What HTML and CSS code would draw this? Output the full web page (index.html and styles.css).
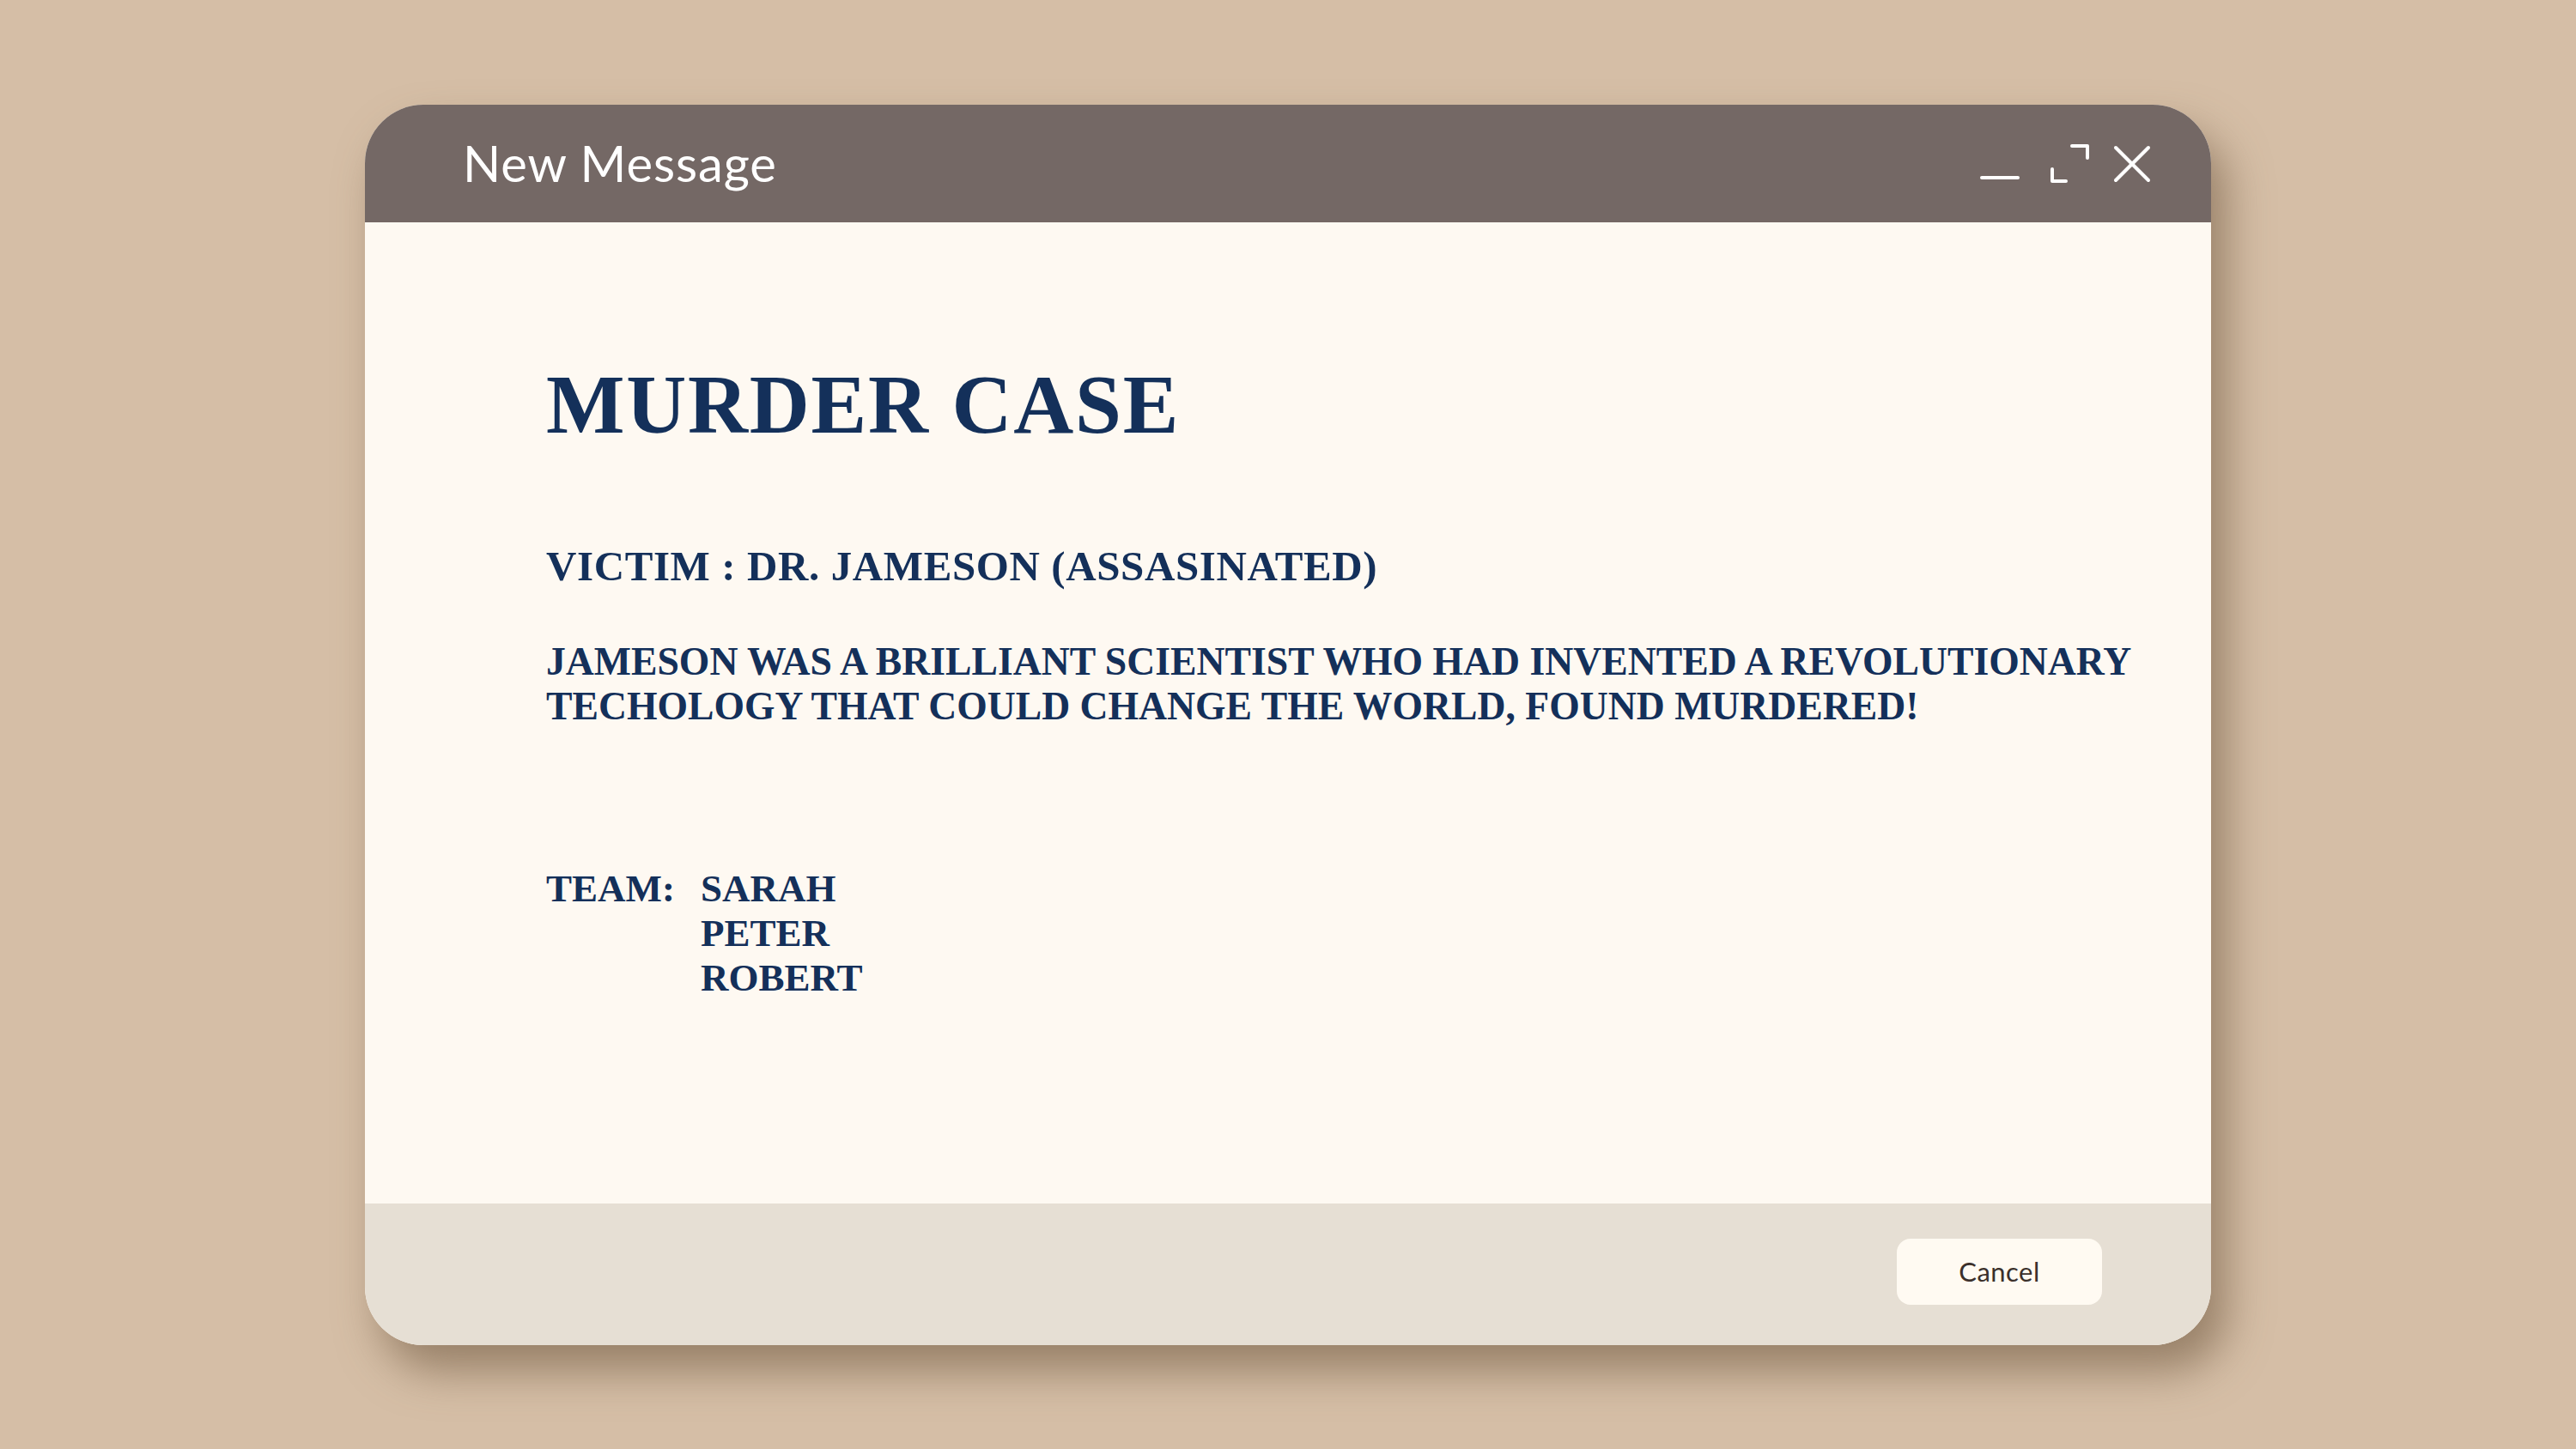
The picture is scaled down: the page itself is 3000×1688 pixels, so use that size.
FILE: index.html
```html
<!DOCTYPE html>
<html lang="en">
<head>
<meta charset="utf-8">
<title>New Message</title>
<link rel="stylesheet" href="styles.css">
</head>
<body>
<main class="stage">
  <section class="window">
    <header class="titlebar">
      <h1 class="title">New Message</h1>
      <div class="controls">
        <svg class="icon icon-min" width="48" height="48" viewBox="0 0 48 48" aria-label="Minimize">
          <line x1="3" y1="40" x2="45" y2="40" />
        </svg>
        <svg class="icon icon-max" width="48" height="48" viewBox="0 0 48 48" aria-label="Maximize">
          <polyline points="3,30 3,44 19,44" />
          <polyline points="26,3 44,3 44,17" />
        </svg>
        <svg class="icon icon-close" width="44" height="44" viewBox="0 0 44 44" aria-label="Close">
          <line x1="3" y1="3" x2="41" y2="41" />
          <line x1="41" y1="3" x2="3" y2="41" />
        </svg>
      </div>
    </header>
    <div class="content">
      <h2 class="case-title">MURDER CASE</h2>
      <p class="victim">VICTIM : DR. JAMESON (ASSASINATED)</p>
      <p class="summary">JAMESON WAS A BRILLIANT SCIENTIST WHO HAD INVENTED A REVOLUTIONARY TECHOLOGY THAT COULD CHANGE THE WORLD, FOUND MURDERED!</p>
      <div class="team">
        <span class="team-label">TEAM:</span>
        <ul class="team-list">
          <li>SARAH</li>
          <li>PETER</li>
          <li>ROBERT</li>
        </ul>
      </div>
    </div>
    <footer class="footer">
      <button class="btn-cancel" type="button">Cancel</button>
    </footer>
  </section>
</main>
</body>
</html>
```

FILE: styles.css
```css
html, body {
  margin: 0;
  padding: 0;
}

body {
  width: 3000px;
  height: 1688px;
  background: #d5bea6;
  font-family: "Liberation Serif", "Times New Roman", serif;
  overflow: hidden;
}

.stage {
  width: 3000px;
  height: 1688px;
  display: flex;
  align-items: center;
  justify-content: center;
}

.window {
  width: 2150px;
  height: 1445px;
  border-radius: 68px;
  overflow: hidden;
  display: flex;
  flex-direction: column;
  background: #fef9f2;
  box-shadow: 18px 30px 50px rgba(112, 88, 64, 0.6);
}

.titlebar {
  height: 137px;
  flex: none;
  background: #746865;
  display: flex;
  align-items: center;
  justify-content: space-between;
  padding: 0 70px 0 114px;
}

.title {
  margin: 0;
  font-family: Lato, "Open Sans", sans-serif;
  font-weight: 400;
  font-size: 58px;
  line-height: 1;
  color: #ffffff;
  letter-spacing: 0.9px;
}

.controls {
  display: flex;
  align-items: center;
  gap: 16px;
  margin-top: 2px;
}

.icon {
  display: block;
  fill: none;
  stroke: #ffffff;
  stroke-width: 4;
  stroke-linecap: round;
  stroke-linejoin: round;
}

.icon-min {
  margin-right: 18px;
}

.icon-max {
  margin-right: 10px;
}

.content {
  flex: 1;
  padding: 164px 60px 0 211px;
  color: #14305a;
}

.case-title {
  margin: 0;
  font-size: 97px;
  line-height: 97px;
  font-weight: 700;
  letter-spacing: 1.7px;
}

.victim {
  margin: 115px 0 0;
  font-size: 49px;
  line-height: 49px;
  font-weight: 700;
  letter-spacing: 0.6px;
}

.summary {
  margin: 61px 0 0;
  font-size: 45.7px;
  line-height: 52px;
  font-weight: 700;
}

.team {
  margin-top: 160px;
  display: grid;
  grid-template-columns: 180px auto;
  font-size: 45px;
  line-height: 52px;
  font-weight: 700;
}

.team-label {
  display: block;
}

.team-list {
  list-style: none;
  margin: 0;
  padding: 0;
}

.footer {
  height: 165px;
  flex: none;
  background: #e6dfd4;
  display: flex;
  align-items: center;
  justify-content: flex-end;
  padding: 0 127px 6px 0;
  box-sizing: border-box;
}

.btn-cancel {
  width: 239px;
  height: 77px;
  border: none;
  border-radius: 16px;
  background: #fffaf2;
  font-family: Lato, "Open Sans", sans-serif;
  font-weight: 400;
  font-size: 31px;
  letter-spacing: 0.5px;
  color: #3b302b;
  padding: 0;
  cursor: pointer;
}
```
